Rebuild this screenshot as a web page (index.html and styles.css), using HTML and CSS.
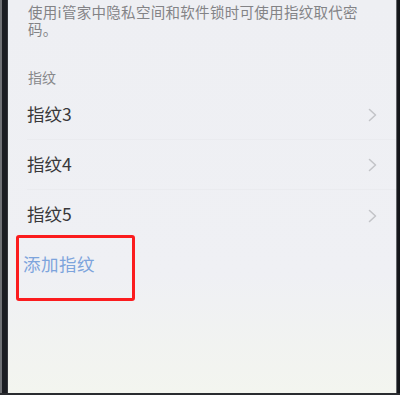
FILE: index.html
```html
<!DOCTYPE html>
<html lang="zh-CN">
<head>
<meta charset="utf-8">
<link rel="stylesheet" href="styles.css">
</head>
<body>
<div class="device">
  <div class="bezel-left"></div>
  <div class="screen">
    <p class="desc">使用i管家中隐私空间和软件锁时可使用指纹取代密码。</p>
    <div class="section-title">指纹</div>
    <div class="list">
      <div class="row"><span>指纹3</span><svg class="chev" width="9" height="14" viewBox="0 0 9 14"><polyline points="1.5,1.5 7.5,7 1.5,12.5" fill="none" stroke="#c3c4c8" stroke-width="1.6" stroke-linecap="round" stroke-linejoin="round"/></svg></div>
      <div class="row"><span>指纹4</span><svg class="chev" width="9" height="14" viewBox="0 0 9 14"><polyline points="1.5,1.5 7.5,7 1.5,12.5" fill="none" stroke="#c3c4c8" stroke-width="1.6" stroke-linecap="round" stroke-linejoin="round"/></svg></div>
      <div class="row last"><span>指纹5</span><svg class="chev" width="9" height="14" viewBox="0 0 9 14"><polyline points="1.5,1.5 7.5,7 1.5,12.5" fill="none" stroke="#c3c4c8" stroke-width="1.6" stroke-linecap="round" stroke-linejoin="round"/></svg></div>
      <div class="add-row"><span class="add">添加指纹</span><div class="highlight"></div></div>
    </div>
    <div class="fill"></div>
  </div>
  <div class="bezel-right"></div>
</div>
<div class="bezel-bottom"></div>
</body>
</html>
```
FILE: styles.css
```css
html, body {
  margin: 0;
  padding: 0;
  width: 400px;
  height: 395px;
  overflow: hidden;
  background: #1a1c20;
}
body {
  display: flex;
  flex-direction: column;
  font-family: "Noto Sans CJK SC", "Noto Sans", sans-serif;
}
.device {
  display: flex;
  height: 393px;
}
.bezel-left {
  width: 8px;
  background: linear-gradient(to right, #6f7175 0, #6f7175 2px, #1b1d22 2.5px, #1b1d22 7px, #4a4c50 8px);
}
.bezel-right {
  width: 4px;
  background: linear-gradient(to right, #8a8c90 0, #16181c 1.5px, #101216 4px);
}
.bezel-bottom {
  height: 2px;
  background: #2a2c30;
}
.screen {
  flex: 1;
  display: flex;
  flex-direction: column;
  background: linear-gradient(to bottom, #eeeff3 0, #eff0f4 70%, #f3f5ef 100%);
}
.desc {
  margin: 0;
  padding: 3px 20px 0 20px;
  font-size: 14.5px;
  line-height: 17px;
  letter-spacing: 0.3px;
  color: #838386;
}
.section-title {
  margin-top: 30px;
  padding-left: 20px;
  font-size: 14px;
  line-height: 20px;
  color: #88888b;
}
.list {
  margin-top: 3px;
  display: flex;
  flex-direction: column;
}
.row {
  height: 50px;
  margin-left: 19px;
  padding-right: 19px;
  display: flex;
  align-items: center;
  justify-content: space-between;
  border-bottom: 1px solid #eaebef;
  box-sizing: border-box;
  font-size: 17.5px;
  color: #38383a;
}
.row span {
  margin-top: -3px;
}
.row.last {
  border-bottom: none;
}
.chev {
  margin-top: 1px;
}
.add-row {
  position: relative;
  height: 50px;
  display: flex;
  align-items: center;
  padding-left: 15px;
}
.add {
  font-size: 17.5px;
  letter-spacing: 0.5px;
  color: #7da4dc;
  margin-top: -3px;
}
.highlight {
  position: absolute;
  left: 8px;
  top: -5px;
  width: 119px;
  height: 66px;
  box-sizing: border-box;
  border: 3px solid #fb1c1e;
  border-radius: 3px;
}
.fill {
  flex: 1;
}
```
